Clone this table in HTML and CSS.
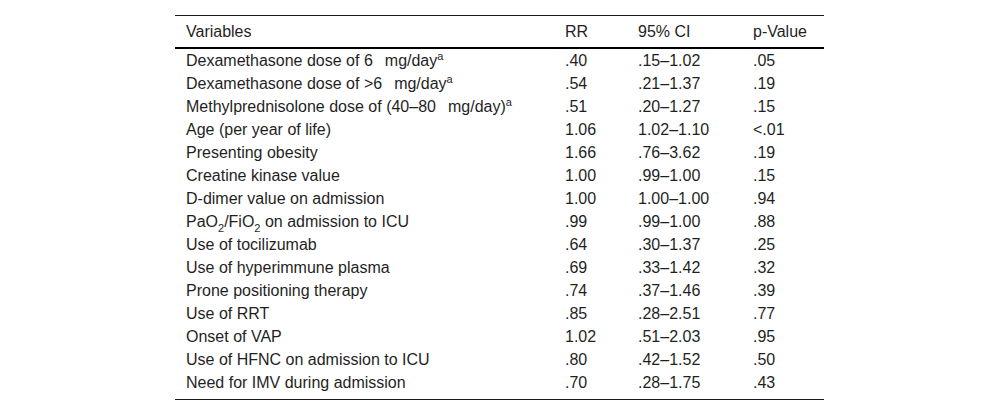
FILE: index.html
```html
<!DOCTYPE html>
<html>
<head>
<meta charset="utf-8">
<link rel="stylesheet" href="styles.css">
</head>
<body>
<div class="data">
  <div class="thead">
    <div class="row head"><span>Variables</span><span>RR</span><span>95% CI</span><span>p-Value</span></div>
  </div>
  <div class="tbody">
    <div class="row"><span>Dexamethasone dose of 6<i class="sp"></i>mg/day<sup>a</sup></span><span>.40</span><span>.15–1.02</span><span>.05</span></div>
    <div class="row"><span>Dexamethasone dose of &gt;6<i class="sp"></i>mg/day<sup>a</sup></span><span>.54</span><span>.21–1.37</span><span>.19</span></div>
    <div class="row"><span>Methylprednisolone dose of (40–80<i class="sp"></i>mg/day)<sup>a</sup></span><span>.51</span><span>.20–1.27</span><span>.15</span></div>
    <div class="row"><span>Age (per year of life)</span><span>1.06</span><span>1.02–1.10</span><span>&lt;.01</span></div>
    <div class="row"><span>Presenting obesity</span><span>1.66</span><span>.76–3.62</span><span>.19</span></div>
    <div class="row"><span>Creatine kinase value</span><span>1.00</span><span>.99–1.00</span><span>.15</span></div>
    <div class="row"><span>D-dimer value on admission</span><span>1.00</span><span>1.00–1.00</span><span>.94</span></div>
    <div class="row"><span>PaO<sub>2</sub>/FiO<sub>2</sub> on admission to ICU</span><span>.99</span><span>.99–1.00</span><span>.88</span></div>
    <div class="row"><span>Use of tocilizumab</span><span>.64</span><span>.30–1.37</span><span>.25</span></div>
    <div class="row"><span>Use of hyperimmune plasma</span><span>.69</span><span>.33–1.42</span><span>.32</span></div>
    <div class="row"><span>Prone positioning therapy</span><span>.74</span><span>.37–1.46</span><span>.39</span></div>
    <div class="row"><span>Use of RRT</span><span>.85</span><span>.28–2.51</span><span>.77</span></div>
    <div class="row"><span>Onset of VAP</span><span>1.02</span><span>.51–2.03</span><span>.95</span></div>
    <div class="row"><span>Use of HFNC on admission to ICU</span><span>.80</span><span>.42–1.52</span><span>.50</span></div>
    <div class="row"><span>Need for IMV during admission</span><span>.70</span><span>.28–1.75</span><span>.43</span></div>
  </div>
</div>
</body>
</html>
```

FILE: styles.css
```css
html, body {
  margin: 0;
  padding: 0;
  background: #fff;
}
body {
  font-family: "Liberation Sans", Arial, sans-serif;
  font-size: 16px;
  color: #1f1f1f;
  padding: 15px 0 0 175px;
}
.data {
  width: 649px;
}
.thead {
  border-top: 1px solid #1a1a1a;
  border-bottom: 2px solid #000;
}
.tbody {
  border-bottom: 1px solid #1a1a1a;
  padding-bottom: 5px;
}
.row {
  display: grid;
  grid-template-columns: 379px 73px 115px 82px;
  height: 23px;
  line-height: 23px;
  white-space: nowrap;
}
.row > span {
  padding-left: 11px;
}
.head {
  height: 31px;
  line-height: 31px;
}
.sp {
  display: inline-block;
  width: 12px;
}
sup {
  font-size: 11px;
  line-height: 0;
  vertical-align: 6px;
}
sub {
  font-size: 11px;
  line-height: 0;
  vertical-align: -5px;
}
```
